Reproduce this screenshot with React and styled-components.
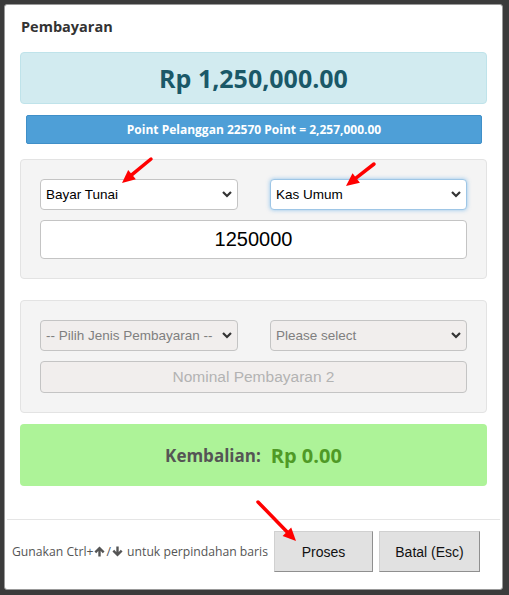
import React from "react";
import styled, { createGlobalStyle } from "styled-components";

const GlobalStyle = createGlobalStyle`
  html, body {
    margin: 0;
    padding: 0;
    background: #3d3d3d;
  }
  body {
    font-family: "Open Sans", "Noto Sans", sans-serif;
  }
`;

const Backdrop = styled.div`
  position: relative;
  width: 509px;
  height: 595px;
  padding: 4px;
  box-sizing: border-box;
  background: #3b3b3b;
`;

const Modal = styled.div`
  width: 499px;
  height: 586px;
  box-sizing: border-box;
  background: #fff;
  border: 1px solid #999;
  border-radius: 3px;
  display: flex;
  flex-direction: column;
`;

const Body = styled.div`
  padding: 10px 15px 0 15px;
  display: flex;
  flex-direction: column;
`;

const Title = styled.h4`
  margin: 0 0 13px 1px;
  font-size: 14.5px;
  font-weight: 700;
  color: #333;
  line-height: 24px;
`;

const Amount = styled.div`
  height: 52px;
  box-sizing: border-box;
  border: 1px solid #bfe3ea;
  border-radius: 4px;
  background: #d2ebf0;
  color: #1a5868;
  font-size: 25px;
  font-weight: 700;
  display: flex;
  align-items: center;
  justify-content: center;
`;

const PointBar = styled.div`
  margin: 11px 5px 0 6px;
  height: 29px;
  box-sizing: border-box;
  border: 1px solid #3f8fc8;
  border-radius: 2px;
  background: #4e9fd7;
  color: #fff;
  font-size: 12px;
  font-weight: 700;
  display: flex;
  align-items: center;
  justify-content: center;
`;

const Panel = styled.div`
  margin-top: ${(p) => p.$top}px;
  padding: 19px 19px ${(p) => p.$bottom}px 19px;
  background: #f4f4f4;
  border: 1px solid #e3e3e3;
  border-radius: 4px;
  display: flex;
  flex-direction: column;
  gap: 10px;
`;

const SelectRow = styled.div`
  display: grid;
  grid-template-columns: 198px 197px;
  justify-content: space-between;
`;

const SelectWrap = styled.div`
  position: relative;
  height: 31px;
`;

const Select = styled.select`
  appearance: none;
  width: 100%;
  height: 100%;
  box-sizing: border-box;
  padding: 0 24px 0 5px;
  font-family: "Liberation Sans", Arial, sans-serif;
  font-size: 13.5px;
  opacity: 1;
  color: ${(p) => (p.disabled ? "#7f7f7f" : "#000")};
  background: ${(p) => (p.disabled ? "#f1eeed" : "#fff")};
  border: 1px solid ${(p) => (p.$focus ? "#9ec6e6" : "#c4c4c4")};
  border-radius: 4px;
  box-shadow: ${(p) => (p.$focus ? "0 0 4px rgba(102,175,233,.7)" : "none")};
  outline: none;
  &:disabled {
    color: #7f7f7f;
    opacity: 1;
  }
`;

const Chevron = styled.svg`
  position: absolute;
  right: 6px;
  top: 11px;
  width: 10px;
  height: 8px;
  pointer-events: none;
`;

const Input = styled.input`
  height: ${(p) => p.$h}px;
  box-sizing: border-box;
  width: 100%;
  text-align: center;
  font-family: "Liberation Sans", Arial, sans-serif;
  font-size: ${(p) => p.$size}px;
  color: #000;
  background: ${(p) => (p.disabled ? "#f1eeed" : "#fff")};
  border: 1px solid #c4c4c4;
  border-radius: 4px;
  outline: none;
  &::placeholder {
    color: #b3b3b3;
  }
`;

const Change = styled.div`
  margin-top: 11px;
  height: 62px;
  border-radius: 4px;
  background: #adf398;
  display: flex;
  align-items: center;
  justify-content: center;
  gap: 10px;
  font-weight: 700;
`;

const ChangeLabel = styled.span`
  color: #555;
  font-size: 17px;
`;

const ChangeValue = styled.span`
  color: #4f9a26;
  font-size: 20px;
`;

const Footer = styled.div`
  margin-top: 33px;
  border-top: 1px solid #e5e5e5;
  margin-left: 2px;
  margin-right: 2px;
  padding: 11px 20px 0 5px;
  display: flex;
  align-items: center;
`;

const Hint = styled.span`
  flex: 1;
  font-size: 12.2px;
  color: #555;
  display: flex;
  align-items: center;
  white-space: nowrap;
`;

const KeyArrow = styled.svg`
  width: 11px;
  height: 11px;
  margin: 0 1px;
`;

const Button = styled.button`
  flex-shrink: 0;
  width: ${(p) => p.$w}px;
  height: 41px;
  margin-left: 6px;
  font-family: "Liberation Sans", Arial, sans-serif;
  font-size: 14px;
  font-weight: 400;
  color: #111;
  background: #e1e1e1;
  border: 1px solid #d0d0d0;
  border-right-color: #8f8f8f;
  border-bottom-color: #8f8f8f;
`;

const Annotation = styled.svg`
  position: absolute;
  left: 0;
  top: 0;
  width: 509px;
  height: 595px;
  pointer-events: none;
`;

const Down = () => (
  <Chevron viewBox="0 0 10 8">
    <path d="M1 2l4 4 4-4" fill="none" stroke="#333" strokeWidth="2.2" />
  </Chevron>
);

const PickSelect = ({ value, focus, disabled }) => (
  <SelectWrap>
    <Select value={value} $focus={focus} disabled={disabled} onChange={() => {}}>
      <option>{value}</option>
    </Select>
    <Down />
  </SelectWrap>
);

const ArrowHead = ({ x1, y1, x2, y2 }) => {
  const a = Math.atan2(y2 - y1, x2 - x1);
  const l = 13;
  const w = 6;
  const bx = x2 - l * Math.cos(a);
  const by = y2 - l * Math.sin(a);
  const px = -Math.sin(a) * w;
  const py = Math.cos(a) * w;
  return (
    <g>
      <line x1={x1} y1={y1} x2={bx} y2={by} stroke="#ff0000" strokeWidth="3.5" strokeLinecap="round" />
      <polygon points={`${x2},${y2} ${bx + px},${by + py} ${bx - px},${by - py}`} fill="#ff0000" />
    </g>
  );
};

export default function App() {
  return (
    <>
      <GlobalStyle />
      <Backdrop>
        <Modal>
          <Body>
            <Title>Pembayaran</Title>
            <Amount>Rp 1,250,000.00</Amount>
            <PointBar>Point Pelanggan 22570 Point = 2,257,000.00</PointBar>
            <Panel $top={15} $bottom={19}>
              <SelectRow>
                <PickSelect value="Bayar Tunai" />
                <PickSelect value="Kas Umum" focus />
              </SelectRow>
              <Input $h={39} $size={20} defaultValue="1250000" />
            </Panel>
            <Panel $top={21} $bottom={19}>
              <SelectRow>
                <PickSelect value="-- Pilih Jenis Pembayaran --" disabled />
                <PickSelect value="Please select" disabled />
              </SelectRow>
              <Input $h={32} $size={15.5} disabled placeholder="Nominal Pembayaran 2" />
            </Panel>
            <Change>
              <ChangeLabel>Kembalian:</ChangeLabel>
              <ChangeValue>Rp 0.00</ChangeValue>
            </Change>
          </Body>
          <Footer>
            <Hint>
              Gunakan Ctrl+
              <KeyArrow viewBox="0 0 12 12">
                <path d="M6 0.5L11.5 6 9.6 7.8 7.3 5.5V11.5H4.7V5.5L2.4 7.8 0.5 6z" fill="#555" />
              </KeyArrow>
              /
              <KeyArrow viewBox="0 0 12 12">
                <path d="M6 11.5L11.5 6 9.6 4.2 7.3 6.5V0.5H4.7V6.5L2.4 4.2 0.5 6z" fill="#555" />
              </KeyArrow>
              &nbsp;untuk perpindahan baris
            </Hint>
            <Button $w={99}>Proses</Button>
            <Button $w={101}>Batal (Esc)</Button>
          </Footer>
        </Modal>
        <Annotation viewBox="0 0 509 595">
          <ArrowHead x1={151} y1={159} x2={122} y2={183} />
          <ArrowHead x1={374} y1={164} x2={346} y2={186} />
          <ArrowHead x1={258} y1={502} x2={296} y2={541} />
        </Annotation>
      </Backdrop>
    </>
  );
}
